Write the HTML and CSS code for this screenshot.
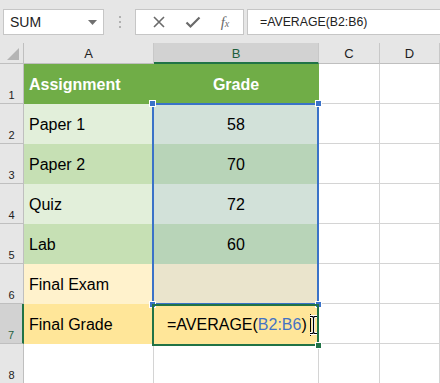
FILE: index.html
```html
<!DOCTYPE html>
<html lang="en">
<head>
  <meta charset="UTF-8" />
  <title>Final Grade</title>
  <link rel="stylesheet" href="styles.css">
</head>
<body>
  <div class="toolbar">
    <div class="namebox">
      <span>SUM</span>
      <svg class="drop" width="9" height="5" viewBox="0 0 9 5"><path d="M0 0h9L4.5 5z" fill="#707070"/></svg>
    </div>
    <div class="grip"><i></i><i></i><i></i></div>
    <div class="buttons">
      <svg width="14" height="14" viewBox="0 0 14 14"><path d="M2 2l10 10M12 2L2 12" stroke="#6a6a6a" stroke-width="1.6"/></svg>
      <svg width="16" height="14" viewBox="0 0 16 14"><path d="M1.5 7.5l4 4L14.5 2.5" stroke="#6a6a6a" stroke-width="2.2" fill="none"/></svg>
      <span class="fx">f<small>x</small></span>
    </div>
    <div class="formula">=AVERAGE(B2:B6)</div>
  </div>

  <div class="sheet">
    <div class="grid">
      <div class="corner"><span class="tri"></span></div>
      <div class="colhead">A</div>
      <div class="colhead sel">B</div>
      <div class="colhead">C</div>
      <div class="colhead">D</div>

      <div class="rowhead">1</div>
      <div class="cell head">Assignment</div>
      <div class="cell head center">Grade</div>
      <div class="cell"></div>
      <div class="cell"></div>

      <div class="rowhead">2</div>
      <div class="cell light">Paper 1</div>
      <div class="cell light-sel center">58</div>
      <div class="cell"></div>
      <div class="cell"></div>

      <div class="rowhead">3</div>
      <div class="cell dark">Paper 2</div>
      <div class="cell dark-sel center">70</div>
      <div class="cell"></div>
      <div class="cell"></div>

      <div class="rowhead">4</div>
      <div class="cell light">Quiz</div>
      <div class="cell light-sel center">72</div>
      <div class="cell"></div>
      <div class="cell"></div>

      <div class="rowhead">5</div>
      <div class="cell dark">Lab</div>
      <div class="cell dark-sel center">60</div>
      <div class="cell"></div>
      <div class="cell"></div>

      <div class="rowhead">6</div>
      <div class="cell exam">Final Exam</div>
      <div class="cell exam-sel"></div>
      <div class="cell"></div>
      <div class="cell"></div>

      <div class="rowhead sel">7</div>
      <div class="cell total">Final Grade</div>
      <div class="cell total edit">=AVERAGE(<span class="ref">B2:B6</span>)<span class="caret"></span></div>
      <div class="cell"></div>
      <div class="cell"></div>

      <div class="rowhead">8</div>
      <div class="cell"></div>
      <div class="cell"></div>
      <div class="cell"></div>
      <div class="cell"></div>
    </div>

    <!-- range highlight B2:B6 -->
    <div class="range"></div>
    <span class="knob k1"></span>
    <span class="knob k2"></span>
    <span class="knob k3"></span>
    <span class="knob k4"></span>

    <!-- active cell B7 -->
    <div class="active"></div>
    <span class="fill"></span>

    <svg class="ibeam" width="9" height="20" viewBox="0 0 9 20">
      <path d="M1 1.5h2.5l1 1 1-1H8M4.5 2.5v15M1 18.5h2.5l1-1 1 1H8" stroke="#fff" stroke-width="3" fill="none"/>
      <path d="M1 1.5h2.5l1 1 1-1H8M4.5 2.5v15M1 18.5h2.5l1-1 1 1H8" stroke="#000" stroke-width="1.2" fill="none"/>
    </svg>
  </div>
</body>
</html>
```

FILE: styles.css
```css
body {
  margin: 0;
  font-family: "Liberation Sans", Arial, sans-serif;
  background: #fff;
  overflow: hidden;
}

.toolbar {
  height: 43px;
  background: #e6e6e6;
  display: flex;
  align-items: flex-start;
  padding-top: 9px;
  box-sizing: border-box;
}

.namebox {
  margin-left: 3px;
  width: 101px;
  height: 26px;
  box-sizing: border-box;
  background: #fff;
  border: 1px solid #c6c6c6;
  display: flex;
  align-items: center;
  justify-content: space-between;
  padding: 0 6px 0 6px;
  font-size: 14px;
  color: #222;
}

.drop {
  margin-top: 1px;
}

.grip {
  width: 31px;
  height: 26px;
  display: flex;
  flex-direction: column;
  align-items: center;
  justify-content: center;
  gap: 3px;
}

.grip i {
  width: 2px;
  height: 2px;
  background: #b0b0b0;
}

.buttons {
  width: 109px;
  height: 26px;
  box-sizing: border-box;
  background: #fff;
  border: 1px solid #c6c6c6;
  display: flex;
  align-items: center;
  justify-content: space-around;
  padding: 0 4px 0 6px;
}

.fx {
  font-family: "Liberation Serif", serif;
  font-style: italic;
  font-size: 15px;
  color: #6a6a6a;
}

.fx small {
  font-size: 10px;
}

.formula {
  margin-left: 3px;
  flex: 1;
  height: 26px;
  box-sizing: border-box;
  background: #fff;
  border: 1px solid #c6c6c6;
  border-right: none;
  padding-left: 12px;
  font-size: 12.3px;
  line-height: 24px;
  color: #222;
}

.sheet {
  position: relative;
}

.grid {
  display: grid;
  grid-template-columns: 24px 130px 165px 61px 1fr;
  grid-template-rows: 21px repeat(7, 40px) 40px;
}

.corner {
  background: #e6e6e6;
  border-right: 1px solid #bfbfbf;
  border-bottom: 1px solid #bfbfbf;
  position: relative;
}

.tri {
  position: absolute;
  right: 4px;
  bottom: 3px;
  width: 0;
  height: 0;
  border-left: 12px solid transparent;
  border-bottom: 12px solid #b4b4b4;
}

.colhead {
  background: #e6e6e6;
  border-right: 1px solid #c8c8c8;
  border-bottom: 1px solid #bfbfbf;
  display: flex;
  align-items: center;
  justify-content: center;
  font-size: 13px;
  color: #222;
  padding-top: 1px;
}

.colhead.sel {
  background: #d2d2d2;
  border-bottom: 2px solid #217346;
  color: #1e5f3c;
}

.rowhead {
  background: #e6e6e6;
  border-right: 1px solid #bfbfbf;
  border-bottom: 1px solid #bfbfbf;
  display: flex;
  align-items: flex-end;
  justify-content: center;
  font-size: 11px;
  color: #222;
  padding-bottom: 2px;
  box-sizing: border-box;
}

.rowhead.sel {
  background: #d2d2d2;
  border-right: 2px solid #217346;
  color: #1e5f3c;
}

.cell {
  border-right: 1px solid #d4d4d4;
  border-bottom: 1px solid #d4d4d4;
  display: flex;
  align-items: center;
  padding: 2px 0 0 5px;
  box-sizing: border-box;
  font-size: 16px;
  color: #000;
  white-space: nowrap;
}

.cell.center {
  justify-content: center;
  padding-left: 0;
}

.head {
  background: #70ad47;
  border-color: #70ad47;
  color: #fff;
  font-weight: bold;
}

.light { background: #e2efda; border-color: #e2efda; }
.dark { background: #c6e0b4; border-color: #c6e0b4; }
.light-sel { background: #d2e1d9; border-color: #d2e1d9; }
.dark-sel { background: #b8d4b8; border-color: #b8d4b8; }
.exam { background: #fff2cc; border-color: #fff2cc; }
.exam-sel { background: #eae4cc; border-color: #eae4cc; }
.total { background: #ffe699; border-color: #ffe699; }

.edit {
  padding-left: 13px;
}

.ref {
  color: #4472c4;
}

.caret {
  display: inline-block;
  width: 1px;
  height: 22px;
  background: #000;
  margin-left: 3px;
}

.range {
  position: absolute;
  left: 152px;
  top: 60px;
  width: 167px;
  height: 202px;
  box-sizing: border-box;
  border: 2px solid #3a72c8;
}

.knob {
  position: absolute;
  width: 5px;
  height: 5px;
  background: #3a72c8;
  border: 1px solid #fff;
}

.k1 { left: 149px; top: 57px; }
.k2 { left: 315px; top: 57px; }
.k3 { left: 149px; top: 258px; }
.k4 { left: 315px; top: 258px; }

.active {
  position: absolute;
  left: 152px;
  top: 261px;
  width: 167px;
  height: 42px;
  box-sizing: border-box;
  border: 2px solid #217346;
}

.fill {
  position: absolute;
  left: 315px;
  top: 299px;
  width: 5px;
  height: 5px;
  background: #217346;
  border: 1px solid #fff;
}

.ibeam {
  position: absolute;
  left: 309px;
  top: 272px;
}
```
